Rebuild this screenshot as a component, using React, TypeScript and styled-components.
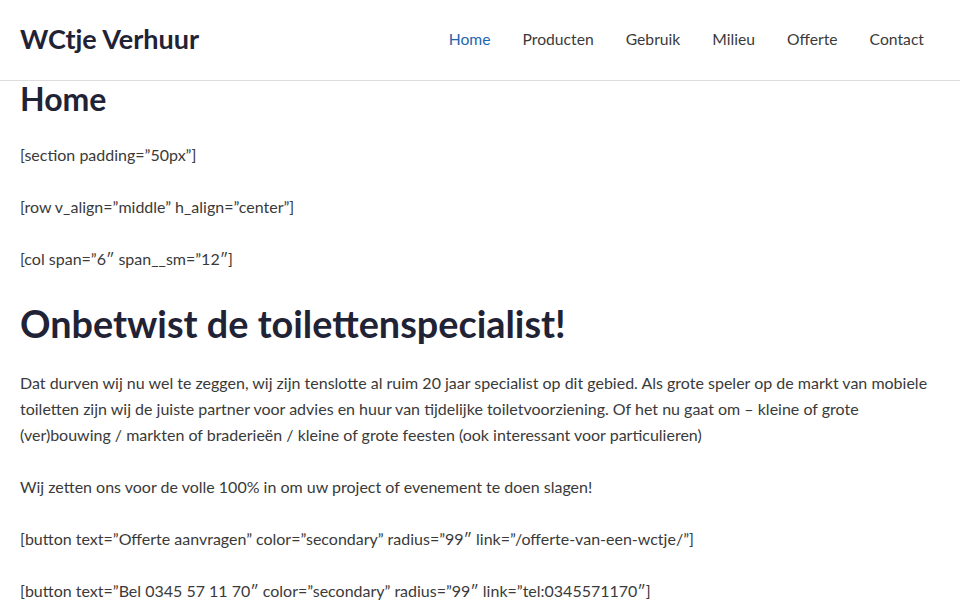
import React from "react";
import styled, { createGlobalStyle } from "styled-components";

const Global = createGlobalStyle`
  html, body { margin: 0; padding: 0; background: #fff; }
  body { font-family: Lato, "Noto Sans", sans-serif; color: #3a3a3a; }
  * { box-sizing: border-box; }
`;

const Header = styled.header`
  height: 81px;
  border-bottom: 1px solid #dddddd;
  display: flex;
  align-items: center;
  justify-content: space-between;
  padding: 0 36px 3px 20px;
`;

const Logo = styled.a`
  font-size: 27px;
  font-weight: 700;
  color: #1f2335;
  text-decoration: none;
`;

const Nav = styled.nav`
  display: flex;
  gap: 32px;
`;

const NavLink = styled.a<{ $active?: boolean }>`
  font-size: 15.7px;
  color: ${(p) => (p.$active ? "#1e66b0" : "#3a3a3a")};
  text-decoration: none;
`;

const Main = styled.main`
  padding: 0 20px;
`;

const PageTitle = styled.h1`
  margin: -2px 0 0;
  font-size: 32px;
  line-height: 40px;
  font-weight: 700;
  color: #1f2335;
`;

const Para = styled.p`
  margin: 0;
  font-size: 16px;
  line-height: 26px;
  & + & { margin-top: 26px; }
`;

const Content = styled.div<{ $top?: number }>`
  margin-top: ${(p) => p.$top ?? 0}px;
  display: flex;
  flex-direction: column;
`;

const Heading = styled.h2`
  margin: 29px 0 0;
  font-size: 37.8px;
  line-height: 46px;
  font-weight: 700;
  color: #1f2335;
`;

const navItems = ["Home", "Producten", "Gebruik", "Milieu", "Offerte", "Contact"];

export default function App() {
  return (
    <>
      <Global />
      <Header>
        <Logo href="#">WCtje Verhuur</Logo>
        <Nav>
          {navItems.map((n, i) => (
            <NavLink key={n} href="#" $active={i === 0}>
              {n}
            </NavLink>
          ))}
        </Nav>
      </Header>
      <Main>
        <PageTitle>Home</PageTitle>
        <Content $top={23}>
          <Para>[section padding=”50px”]</Para>
          <Para>[row v_align=”middle” h_align=”center”]</Para>
          <Para>[col span=”6″ span__sm=”12″]</Para>
        </Content>
        <Heading>Onbetwist de toilettenspecialist!</Heading>
        <Content $top={22.5}>
          <Para>
            Dat durven wij nu wel te zeggen, wij zijn tenslotte al ruim 20 jaar specialist op dit gebied. Als grote speler op de markt van mobiele toiletten zijn wij de juiste partner voor advies en huur van tijdelijke toiletvoorziening. Of het nu gaat om – kleine of grote (ver)bouwing / markten of braderieën / kleine of grote feesten (ook interessant voor particulieren)
          </Para>
          <Para>Wij zetten ons voor de volle 100% in om uw project of evenement te doen slagen!</Para>
          <Para>[button text=”Offerte aanvragen” color=”secondary” radius=”99″ link=”/offerte-van-een-wctje/”]</Para>
          <Para>[button text=”Bel 0345 57 11 70″ color=”secondary” radius=”99″ link=”tel:0345571170″]</Para>
        </Content>
      </Main>
    </>
  );
}
